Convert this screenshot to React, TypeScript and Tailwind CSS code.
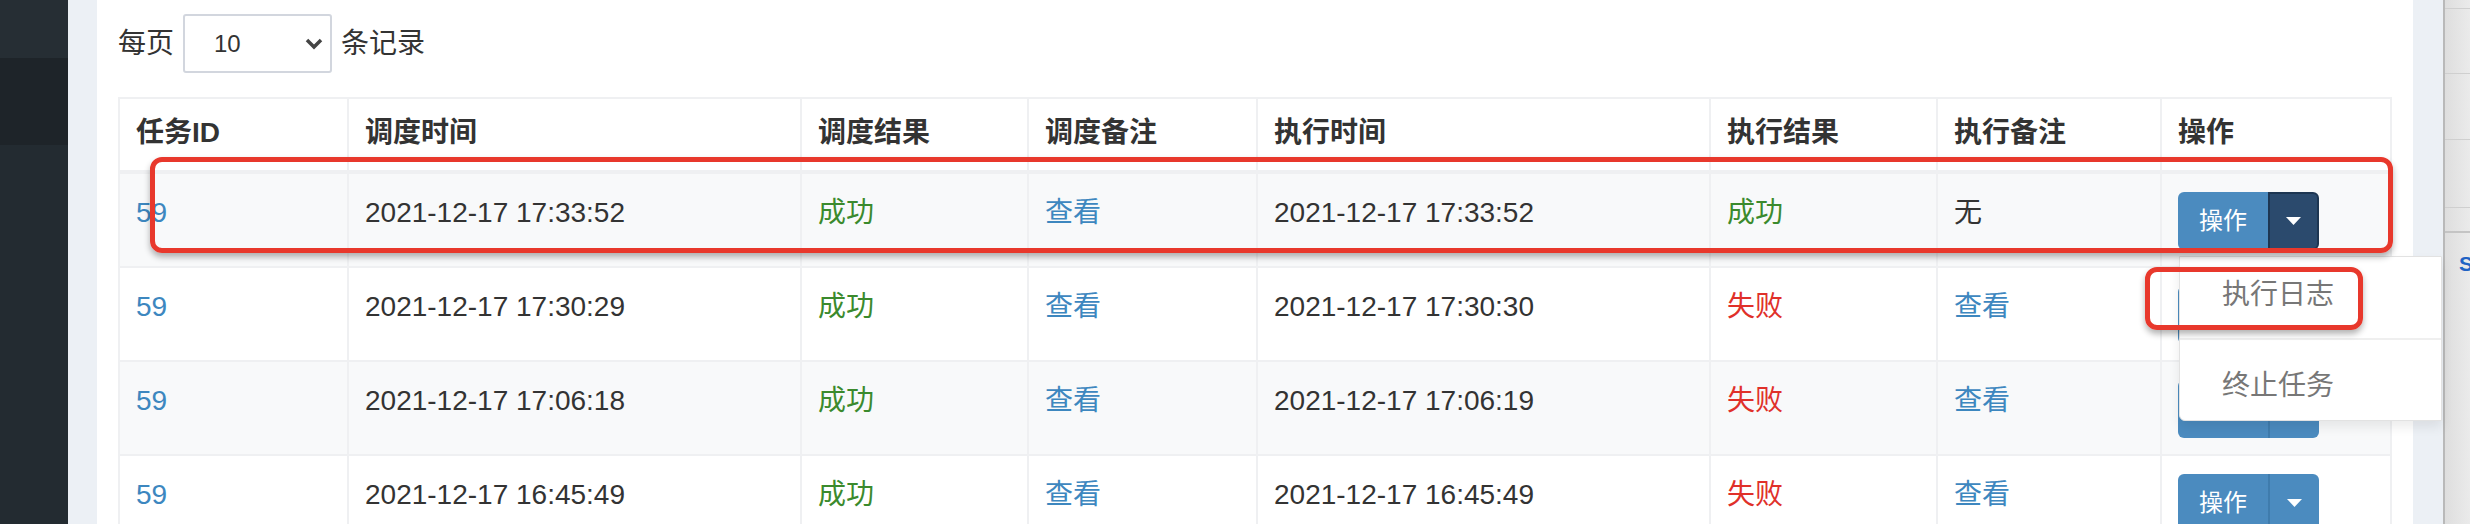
import React from "react";
import clsx from "clsx";

type LogRow = {
  triggerTime: string;
  handleTime: string;
  failed: boolean;
  handleNote: string;
  striped: boolean;
  btn: "active" | "normal";
};

const rows: LogRow[] = [
  { triggerTime: "2021-12-17 17:33:52", handleTime: "2021-12-17 17:33:52", failed: false, handleNote: "无", striped: true, btn: "active" },
  { triggerTime: "2021-12-17 17:30:29", handleTime: "2021-12-17 17:30:30", failed: true, handleNote: "查看", striped: false, btn: "normal" },
  { triggerTime: "2021-12-17 17:06:18", handleTime: "2021-12-17 17:06:19", failed: true, handleNote: "查看", striped: true, btn: "normal" },
  { triggerTime: "2021-12-17 16:45:49", handleTime: "2021-12-17 16:45:49", failed: true, handleNote: "查看", striped: false, btn: "normal" },
];

const headers = ["任务ID", "调度时间", "调度结果", "调度备注", "执行时间", "执行结果", "执行备注", "操作"];

const grid = "grid grid-cols-[229px_453px_227px_229px_453px_227px_224px_228px]";

function Cell({ children, last, className }: { children?: React.ReactNode; last?: boolean; className?: string }) {
  return (
    <div
      className={clsx(
        "pl-4 leading-[40px] whitespace-nowrap",
        !last && "border-r-2 border-[#eff0f2]",
        className
      )}
    >
      {children}
    </div>
  );
}

function Caret() {
  return (
    <svg width="15" height="8" viewBox="0 0 15 8">
      <polygon points="0,0 15,0 7.5,8" fill="#ffffff" />
    </svg>
  );
}

function ActionButton({ active, withMenu }: { active?: boolean; withMenu?: boolean }) {
  return (
    <div className="relative inline-flex h-[58px]">
      <div className="w-[90px] h-full rounded-l-[6px] bg-[#4b8bbf] text-white text-[24px] flex items-center justify-center">
        操作
      </div>
      <div
        className={clsx(
          "w-[51px] h-full rounded-r-[6px] flex items-center justify-center",
          active ? "bg-[#2b4a6d] border-2 border-[#1d3652]" : "bg-[#4b8bbf] border-l-2 border-[#3f7cad]"
        )}
      >
        <Caret />
      </div>
      {withMenu && (
        // dropdown opened from the first row
        <div className="absolute left-[1px] top-full mt-[6px] w-[263px] bg-white border border-[#e2e2e2] rounded-bl-[6px] shadow-[0_6px_12px_rgba(0,0,0,0.08)] z-10 text-[28px] text-[#777]">
          <div className="h-[83px] border-b-2 border-[#efefef] flex items-center pl-[42px] pb-[6px]">执行日志</div>
          <div className="h-[80px] flex items-center pl-[42px] pt-[11px]">终止任务</div>
        </div>
      )}
    </div>
  );
}

export default function App() {
  return (
    <div className="relative w-[2470px] h-[524px] overflow-hidden flex font-['Liberation_Sans','Noto_Sans_CJK_SC',sans-serif] text-[#333]">
      {/* sidebar */}
      <div className="w-[68px] flex flex-col shrink-0">
        <div className="h-[58px] bg-[#262e34]" />
        <div className="h-[87px] bg-[#1e2429]" />
        <div className="flex-1 bg-[#232b31]" />
      </div>
      <div className="w-[29px] bg-[#ecf0f5] shrink-0" />

      {/* main panel */}
      <div className="w-[2316px] shrink-0 bg-white pl-[21px] pt-[14px]">
        <div className="flex items-center h-[59px] text-[28px]">
          <span>每页</span>
          <div className="ml-[9px] w-[149px] h-[59px] border-2 border-[#d2d6de] rounded-[3px] flex items-center justify-between pl-[29px] pr-[7px]">
            <span className="text-[24px] text-[#333]">10</span>
            <svg width="18" height="12" viewBox="0 0 18 12">
              <polyline points="2,2 9,9 16,2" fill="none" stroke="#444" strokeWidth="3.5" />
            </svg>
          </div>
          <span className="ml-[9px]">条记录</span>
        </div>

        <div className="mt-[24px] w-[2274px] border-2 border-[#eff0f2] text-[28px]">
          <div className={clsx(grid, "h-[75px] border-b-4 border-[#eff0f2] font-bold")}>
            {headers.map((h, i) => (
              <Cell key={h} last={i === headers.length - 1} className="pt-[14px]">
                {h}
              </Cell>
            ))}
          </div>
          {rows.map((r, i) => (
            <div
              key={i}
              className={clsx(grid, "h-[94px] border-b-2 border-[#eff0f2]", r.striped ? "bg-[#f8f9fa]" : "bg-white")}
            >
              <Cell className="pt-[19px] text-[#3d87bf]">59</Cell>
              <Cell className="pt-[19px]">{r.triggerTime}</Cell>
              <Cell className="pt-[19px] text-[#3b8a2d]">成功</Cell>
              <Cell className="pt-[19px] text-[#3d87bf]">查看</Cell>
              <Cell className="pt-[19px]">{r.handleTime}</Cell>
              <Cell className={clsx("pt-[19px]", r.failed ? "text-[#e0302a]" : "text-[#3b8a2d]")}>
                {r.failed ? "失败" : "成功"}
              </Cell>
              <Cell className={clsx("pt-[19px]", r.handleNote === "查看" && "text-[#3d87bf]")}>{r.handleNote}</Cell>
              <Cell last className="pt-[18px]">
                <ActionButton active={r.btn === "active"} withMenu={i === 0} />
              </Cell>
            </div>
          ))}
        </div>
      </div>

      <div className="w-[30px] bg-[#ecf0f5] shrink-0" />

      {/* neighbouring window edge */}
      <div className="flex-1 border-l-2 border-[#b9b9b9] bg-gradient-to-r from-[#dedede] to-[#ececec] flex flex-col">
        <div className="h-[9px] border-b border-[#cfcfcf]" />
        <div className="h-[65px] border-b border-[#cfcfcf]" />
        <div className="h-[66px] border-b border-[#cfcfcf]" />
        <div className="h-[68px] border-b border-[#cfcfcf]" />
        <div className="h-[25px] border-b-2 border-[#c4c4c4]" />
        <div className="pl-[14px] pt-[20px] text-[21px] font-bold leading-none text-[#2062c4]">S</div>
      </div>

      {/* annotation boxes */}
      <div className="absolute left-[150px] top-[157px] w-[2243px] h-[96px] border-[5px] border-[#e8382c] rounded-[12px] shadow-[0_4px_6px_rgba(0,0,0,0.3)] z-20" />
      <div className="absolute left-[2145px] top-[267px] w-[218px] h-[63px] border-[5px] border-[#e8382c] rounded-[12px] shadow-[0_4px_6px_rgba(0,0,0,0.3)] z-20" />
    </div>
  );
}
